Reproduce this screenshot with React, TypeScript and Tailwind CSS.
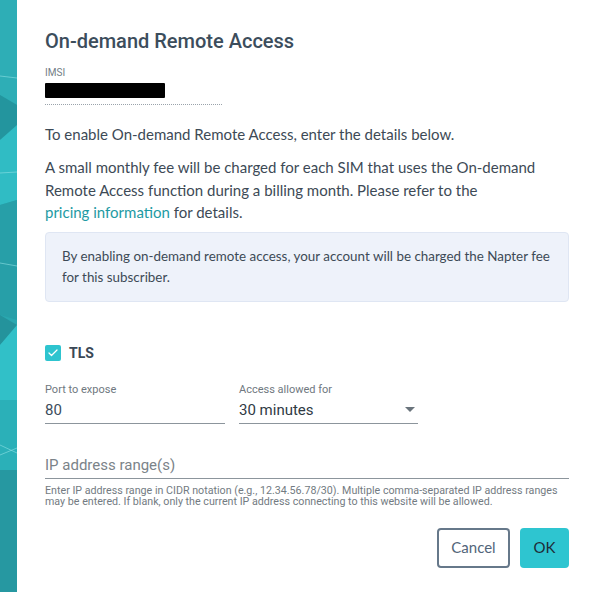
import { Check } from "lucide-react";

const sans = { fontFamily: "Lato, 'Liberation Sans', sans-serif" };

const SideStrip = () => (
  <svg className="h-full w-[17px] shrink-0" viewBox="0 0 17 592" preserveAspectRatio="none">
    <rect width="17" height="592" fill="#2aa8b0" />
    <polygon points="0,0 17,0 17,105 0,95" fill="#2eaeb6" />
    <polygon points="0,95 17,105 17,130 0,140" fill="#23959e" />
    <polygon points="0,140 17,125 17,200 0,205" fill="#30bcc4" />
    <polygon points="0,205 17,200 17,320 0,315" fill="#279fa8" />
    <polygon points="0,315 17,325 17,330 0,345" fill="#24939c" />
    <polygon points="0,345 17,325 17,400 0,400" fill="#31c0c8" />
    <polygon points="0,400 17,400 17,470 0,470" fill="#2bb0b8" />
    <polygon points="0,470 17,470 17,592 0,592" fill="#2698a1" />
    <line x1="0" y1="76" x2="17" y2="78" stroke="#8fe0e4" strokeWidth="0.6" />
    <line x1="0" y1="173" x2="17" y2="172" stroke="#8fe0e4" strokeWidth="0.6" />
    <line x1="0" y1="263" x2="17" y2="266" stroke="#8fe0e4" strokeWidth="0.6" />
    <line x1="0" y1="445" x2="17" y2="453" stroke="#8fe0e4" strokeWidth="0.6" />
    <line x1="0" y1="455" x2="17" y2="448" stroke="#8fe0e4" strokeWidth="0.6" />
  </svg>
);

export default function App() {
  return (
    <div className="flex h-[592px] w-[596px] overflow-hidden bg-white">
      <SideStrip />
      <div className="flex flex-1 flex-col pl-[28px] pr-[27px] pt-[29px]" style={{ fontFamily: "Roboto, sans-serif" }}>
        <h1 className="text-[20px] font-medium leading-6 text-[#3c4d5c]">On-demand Remote Access</h1>

        <div className="mt-[14px] text-[10px] leading-3 text-[#737d86]">IMSI</div>
        <div className="mt-[4px] h-[15px] w-[120px] rounded-[1px] bg-black" />
        <div className="mt-[6px] w-[177px] border-b border-dotted border-[#9aa3ab]" />

        <div style={sans} className="text-[15px] text-[#3d4a56]">
          <p className="mt-[18px] leading-[22px]">To enable On-demand Remote Access, enter the details below.</p>
          <p className="mt-[11px] leading-[22.5px]">
            A small monthly fee will be charged for each SIM that uses the On-demand Remote Access function during a
            billing month. Please refer to the
            <br />
            <span className="text-[#1e9aa3]">pricing information</span> for details.
          </p>
          <div className="mt-[8px] rounded-[4px] border border-[#dfe6f3] bg-[#eef2fa] px-[16px] py-[13px] text-[13.4px] leading-[21px]">
            By enabling on-demand remote access, your account will be charged the Napter fee for this subscriber.
          </div>
        </div>

        <label className="mt-[41px] flex items-center gap-[8px]">
          <span className="flex h-[16px] w-[16px] items-center justify-center rounded-[2px] bg-[#2ec4cf]">
            <Check className="h-[12px] w-[12px] text-white" strokeWidth={2.5} />
          </span>
          <span className="text-[14px] font-bold text-[#3a4856]">TLS</span>
        </label>

        <div className="mt-[20px] flex gap-[14px]">
          <div className="w-[180px] border-b border-[#8c959c] pb-[3px]">
            <div className="text-[11px] leading-3 text-[#6f7880]">Port to expose</div>
            <div className="mt-[4px] text-[15px] leading-5 text-[#3c4d5c]">80</div>
          </div>
          <div className="w-[179px] border-b border-[#8c959c] pb-[3px]">
            <div className="text-[11px] leading-3 text-[#6f7880]">Access allowed for</div>
            <div className="mt-[4px] flex items-center justify-between text-[15px] leading-5 text-[#2f3a44]">
              <span>30 minutes</span>
              <svg width="10" height="5" viewBox="0 0 10 5" className="mr-[3px]">
                <polygon points="0,0 10,0 5,5" fill="#6a747c" />
              </svg>
            </div>
          </div>
        </div>

        <div className="mt-[31px] border-b border-[#8c959c] pb-[3px] text-[15px] leading-5 text-[#7b8389]">
          IP address range(s)
        </div>
        <p className="mt-[6px] text-[10.7px] leading-[11px] text-[#737b82]">
          Enter IP address range in CIDR notation (e.g., 12.34.56.78/30). Multiple comma-separated IP address ranges may
          be entered. If blank, only the current IP address connecting to this website will be allowed.
        </p>

        <div className="mt-[21px] flex justify-end gap-[10px]" style={sans}>
          <button className="h-[40px] w-[73px] rounded-[4px] border-2 border-[#66788a] text-[15px] text-[#52657a]">
            Cancel
          </button>
          <button className="h-[40px] w-[49px] rounded-[4px] bg-[#2ec5d0] text-[15px] text-[#1f2d38]">OK</button>
        </div>
      </div>
    </div>
  );
}
